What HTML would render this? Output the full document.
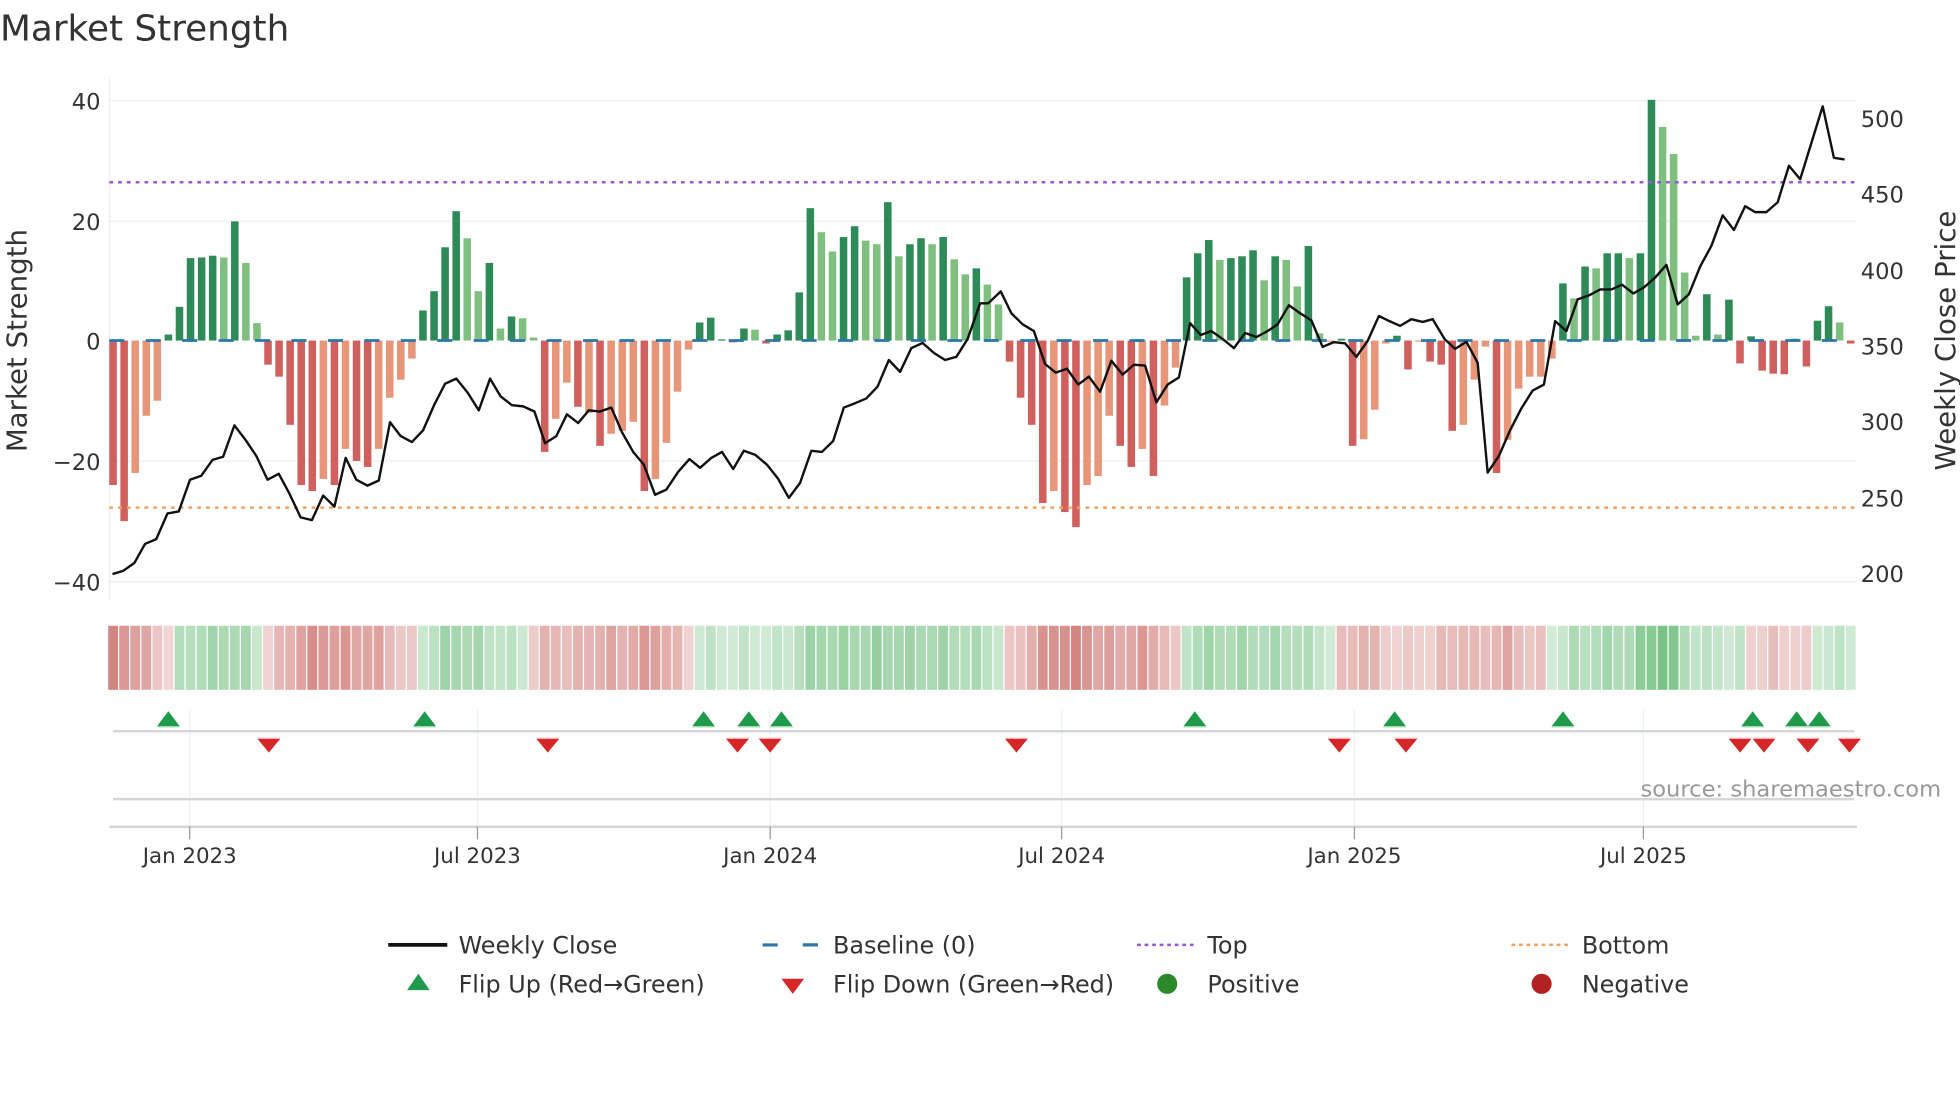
<!DOCTYPE html>
<html><head><meta charset="utf-8"><style>
html,body{margin:0;padding:0;background:#fff;}
svg{display:block;}
text{font-family:"DejaVu Sans","Liberation Sans",sans-serif;fill:#333;}
</style></head><body>
<svg id="s" width="1960" height="1102" viewBox="0 0 1560 877" xmlns="http://www.w3.org/2000/svg">
<rect width="1560" height="877" fill="#fff"/>
<text x="0" y="32" font-size="28.5">Market Strength</text>
<g stroke="#eceff3" stroke-width="1">
<line x1="87" x2="1478" y1="80" y2="80"/><line x1="87" x2="1478" y1="176" y2="176"/>
<line x1="87" x2="1478" y1="367" y2="367"/><line x1="87" x2="1478" y1="463" y2="463"/>
<line x1="87" x2="87" y1="62" y2="478"/>
</g>
<g font-size="18" text-anchor="end">
<text x="80" y="87">40</text><text x="80" y="183">20</text><text x="80" y="278">0</text>
<text x="80" y="374">−20</text><text x="80" y="470">−40</text>
</g>
<g font-size="18">
<text x="1481" y="101">500</text><text x="1481" y="161">450</text><text x="1481" y="222">400</text>
<text x="1481" y="282">350</text><text x="1481" y="342">300</text><text x="1481" y="403">250</text><text x="1481" y="463">200</text>
</g>
<text font-size="22" transform="translate(21,271) rotate(-90)" text-anchor="middle">Market Strength</text>
<text font-size="22" transform="translate(1556,271) rotate(-90)" text-anchor="middle">Weekly Close Price</text>
<g id="bars"></g>
<line x1="87" x2="1478" y1="271" y2="271" stroke="#2a77a8" stroke-width="2.2" stroke-dasharray="12 17"/>
<line x1="87" x2="1478" y1="145" y2="145" stroke="#9b59d0" stroke-width="2" stroke-dasharray="3 4"/>
<line x1="87" x2="1478" y1="404" y2="404" stroke="#f0a35e" stroke-width="2" stroke-dasharray="3 4"/>
<g transform="scale(0.4975,0.3155)">
<polyline id="pl" fill="none" stroke="#111" stroke-width="2.4" vector-effect="non-scaling-stroke" stroke-linejoin="round" points=""/>
</g>
<g id="heat"></g>
<g stroke="#eef1f4" stroke-width="1">
<line x1="151" x2="151" y1="565" y2="658"/><line x1="380" x2="380" y1="565" y2="658"/>
<line x1="613" x2="613" y1="565" y2="658"/><line x1="845" x2="845" y1="565" y2="658"/>
<line x1="1078" x2="1078" y1="565" y2="658"/><line x1="1308" x2="1308" y1="565" y2="658"/>
</g>
<line x1="90" x2="1476" y1="582" y2="582" stroke="#d3d7da" stroke-width="2"/>
<line x1="90" x2="1476" y1="636" y2="636" stroke="#d3d7da" stroke-width="2"/>
<line x1="87" x2="1478" y1="658" y2="658" stroke="#d3d7da" stroke-width="2"/>
<g stroke="#999" stroke-width="1">
<line x1="151" x2="151" y1="658" y2="668"/><line x1="380" x2="380" y1="658" y2="668"/>
<line x1="613" x2="613" y1="658" y2="668"/><line x1="845" x2="845" y1="658" y2="668"/>
<line x1="1078" x2="1078" y1="658" y2="668"/><line x1="1308" x2="1308" y1="658" y2="668"/>
</g>
<g id="mk"></g>
<g font-size="17" text-anchor="middle">
<text x="151" y="687">Jan 2023</text><text x="380" y="687">Jul 2023</text><text x="613" y="687">Jan 2024</text>
<text x="845" y="687">Jul 2024</text><text x="1078" y="687">Jan 2025</text><text x="1308" y="687">Jul 2025</text>
</g>
<text x="1545" y="634" font-size="18" text-anchor="end" style="fill:#999">source: sharemaestro.com</text>
<g font-size="19">
<line x1="309" x2="356" y1="752" y2="752" stroke="#111" stroke-width="3"/>
<text x="365" y="759">Weekly Close</text>
<line x1="607" x2="651" y1="752" y2="752" stroke="#2a77a8" stroke-width="2.5" stroke-dasharray="12 20"/>
<line x1="639" x2="651" y1="752" y2="752" stroke="#2a77a8" stroke-width="2.5"/>
<text x="663" y="759">Baseline (0)</text>
<line x1="905" x2="950" y1="752" y2="752" stroke="#9b59d0" stroke-width="2" stroke-dasharray="3 3"/>
<text x="961" y="759">Top</text>
<line x1="1203" x2="1248" y1="752" y2="752" stroke="#f0a35e" stroke-width="2" stroke-dasharray="3 3"/>
<text x="1259" y="759">Bottom</text>
<polygon points="324,788 342,788 333,775" fill="#1e9a4a"/>
<text x="365" y="790">Flip Up (Red→Green)</text>
<polygon points="622,779 640,779 631,791" fill="#d62728"/>
<text x="663" y="790">Flip Down (Green→Red)</text>
<circle cx="929" cy="783" r="8" fill="#2a8a2a"/>
<text x="961" y="790">Positive</text>
<circle cx="1227" cy="783" r="8" fill="#b22222"/>
<text x="1259" y="790">Negative</text>
</g>
</svg>
<script>
var NS="http://www.w3.org/2000/svg";
function el(t,a,p){var e=document.createElementNS(NS,t);for(var k in a)e.setAttribute(k,a[k]);p.appendChild(e);return e;}
var V=[[-24,1],[-30,1],[-22,0],[-12.5,0],[-10,0],[1,1],[5.6,1],[13.7,1],[13.8,1],[14.1,1],[13.8,0],[19.8,1],[12.9,0],[2.9,0],
[-4,1],[-6,1],[-14,1],[-24,1],[-25,1],[-23,0],[-24,1],[-18,0],[-20,1],[-21,1],[-18,0],[-9.5,0],[-6.5,0],[-3,0],
[5,1],[8.2,1],[15.5,1],[21.5,1],[17,0],[8.2,0],[12.9,1],[2,0],[4,1],[3.7,0],[0.5,0],
[-18.5,1],[-13,0],[-7,0],[-11,1],[-12,0],[-17.5,1],[-15.5,0],[-15,0],[-13.5,0],[-25,1],[-23,0],[-17,0],[-8.5,0],[-1.5,0],
[3,1],[3.8,1],[0.2,1],[-0.3,1],[2,1],[1.8,0],[-0.5,1],[1,1],[1.7,1],[8,1],[22,1],[18,0],[14.8,0],[17.2,1],[19,1],[16.6,0],[16,0],[23,1],[14,0],[16,1],[17,1],[16,0],[17.2,1],[13.5,0],[11,0],[12,1],[9.3,0],[6,0],
[-3.5,1],[-9.5,1],[-14,1],[-27,1],[-25,0],[-28.5,1],[-31,1],[-24,0],[-22.5,0],[-12.5,0],[-17.5,1],[-21,1],[-18,0],[-22.5,1],[-10.8,0],[-4.5,0],
[10.5,1],[14.5,1],[16.7,1],[13.4,0],[13.7,1],[14,1],[15,1],[10,0],[14,1],[13.4,0],[9,0],[15.7,1],[1.2,0],
[-0.2,0],[0.3,1],[-17.5,1],[-16.4,0],[-11.5,0],[-0.5,0],[0.8,1],[-4.8,1],[-0.2,0],[-3.5,1],[-4,1],[-15,1],[-14,0],[-6.5,0],[-1,0],
[-22,1],[-16.5,0],[-8,0],[-6,0],[-6,0],[-3,0],
[9.5,1],[7,0],[12.3,1],[12,0],[14.5,1],[14.5,1],[13.7,0],[14.5,1],[40,1],[35.5,0],[31,0],[11.3,0],[0.8,0],[7.7,1],[1,0],[6.8,1],
[-3.8,1],[0.7,1],[-5,1],[-5.5,1],[-5.6,1],[0.3,1],[-4.3,1],[3.3,1],[5.7,1],[3,0],[-0.5,1]];
var B=document.getElementById("bars"),H=document.getElementById("heat"),n=V.length,dx=(1473-90)/(n-1);
for(var i=0;i<n;i++){var v=V[i][0],d=V[i][1],x=90+dx*i,h=Math.abs(v)*4.79,y=v>=0?271-h:271;
 var c=v>=0?(d?"#2e8b57":"#7fbf7f"):(d?"#d0605e":"#e8967a");
 el("rect",{x:x-3,y:y,width:6,height:Math.max(h,0.5),fill:c},B);
 var s=0,k=0;for(var j=Math.max(0,i-1);j<=Math.min(n-1,i+1);j++){s+=V[j][0];k++;}s/=k;
 var hc=s>=0?"rgba(76,175,94,"+(0.25+0.55*Math.min(1,Math.abs(s)/40)+(i%3==0?0.08:0))+")":"rgba(200,100,95,"+(0.25+0.5*Math.min(1,Math.abs(s)/30)+(i%3==0?0.08:0))+")";
 el("rect",{x:x-dx/2+0.5,y:498,width:dx-1,height:51,fill:hc},H);
}
var P=[[180,1448],[197,1440],[215,1420],[232,1372],[250,1360],[268,1295],[286,1290],[304,1210],[322,1200],[340,1160],[357,1152],[375,1073],[393,1110],[410,1150],[428,1210],[446,1195],[463,1245],[481,1305],[499,1312],[517,1250],[535,1278],[553,1155],[570,1210],[588,1225],[606,1212],[624,1065],[641,1100],[659,1115],[677,1085],[695,1020],[712,968],[730,955],[748,990],[766,1035],[784,955],[801,1000],[819,1022],[837,1025],[855,1038],[872,1118],[890,1100],[907,1045],[925,1067],[942,1035],[960,1038],[978,1028],[995,1090],[1013,1140],[1030,1172],[1048,1248],[1066,1235],[1085,1190],[1103,1158],[1120,1180],[1138,1155],[1155,1140],[1173,1183],[1190,1137],[1208,1147],[1227,1172],[1245,1208],[1262,1256],[1280,1218],[1298,1137],[1315,1140],[1333,1112],[1350,1028],[1368,1017],[1386,1005],[1404,975],[1422,908],[1440,938],[1458,878],[1476,865],[1494,890],[1512,908],[1530,900],[1548,855]];
var P2=[[0,765],[13,765],[33,735],[50,790],[68,818],[86,835],[104,918],[121,940],[139,930],[157,970],[174,950],[192,988],[210,910],[228,945],[246,920],[264,922],[282,1015],[300,970],[318,952],[336,815],[353,845],[370,835],[388,855],[406,878],[424,840],[442,850],[460,835],[476,818],[494,770],[512,790],[530,808],[548,875],[566,863],[584,866],[602,900],[620,860],[638,797],[655,810],[672,822],[690,805],[708,812],[724,805],[743,855],[760,880],[778,862],[796,915],[812,1192],[830,1150],[848,1085],[866,1030],[884,985],[902,970],[920,810],[938,835],[956,755],[974,745],[992,730],[1010,730],[1027,718],[1045,740],[1062,725],[1080,700],[1098,668],[1116,768],[1134,742],[1152,672],[1170,620],[1188,543],[1206,580],[1224,520],[1240,535],[1258,535],[1276,510],[1294,418],[1312,452],[1330,360],[1348,268],[1366,398],[1383,402]];
var pts=P.map(function(p){return p[0]+","+p[1];});
P2.forEach(function(p){pts.push((p[0]+1568)+","+p[1]);});
document.getElementById("pl").setAttribute("points",pts.join(" "));
var M=document.getElementById("mk");
[134,338,560,596,622,951,1110,1244,1395,1430,1448].forEach(function(x){
 el("polygon",{points:(x-9)+",578 "+(x+9)+",578 "+x+",566",fill:"#1e9a4a"},M);
 el("line",{x1:x-9,x2:x+9,y1:578.5,y2:578.5,stroke:"#a8e0b5","stroke-width":1},M);});
[214,436,587,613,809,1066,1119,1385,1404,1439,1472].forEach(function(x){
 el("polygon",{points:(x-9)+",588 "+(x+9)+",588 "+x+",599",fill:"#d62728"},M);
 el("line",{x1:x-9,x2:x+9,y1:587.5,y2:587.5,stroke:"#f4b0b0","stroke-width":1},M);});
</script>
</body></html>
